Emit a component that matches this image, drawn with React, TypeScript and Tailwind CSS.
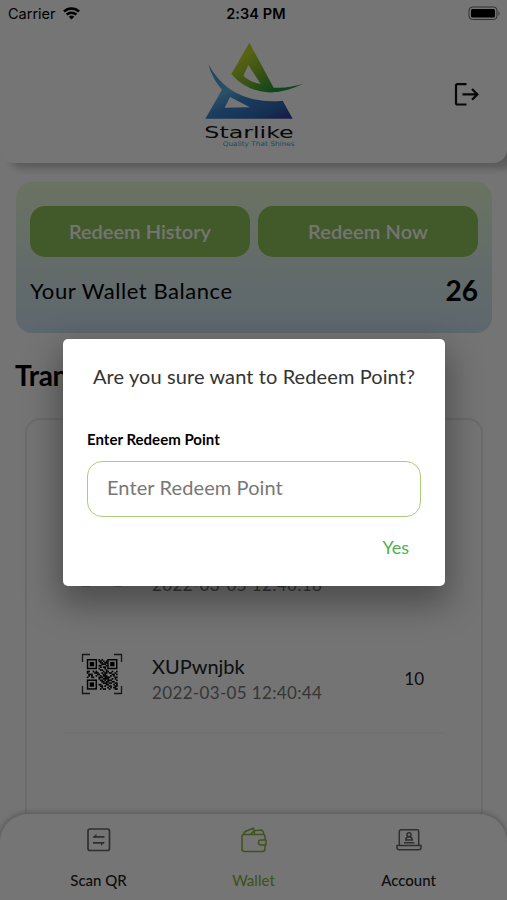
import React, { useState } from 'react';

const TRANSACTIONS = [
    { id: 1, code: 'XUPwnjbk', date: '2022-03-05 12:40:18', points: 10 },
    { id: 2, code: 'XUPwnjbk', date: '2022-03-05 12:40:44', points: 10 },
];

const QR_ROWS = [
    '000000001010000000000',
    '000000001101010000000',
    '000000000110110000000',
    '000000000011100000000',
    '000000001100010000000',
    '000000000101100000000',
    '000000001000100000000',
    '000000000110010000000',
    '110010100001011001001',
    '100001110010110110010',
    '011100011001100001101',
    '010100100101110010100',
    '100110001110111100011',
    '000000001001111001010',
    '000000000110101110001',
    '000000000011011001100',
    '000000000001110110011',
    '000000001100011000101',
    '000000000110100110011',
    '000000000010001010110',
    '000000000101100100011',
];

function QrIcon() {
    return (
        <svg width="42" height="42" viewBox="0 0 42 42" fill="none">
            <path d="M1.5 9V1.5H9M33 1.5h7.5V9M40.5 33v7.5H33M9 40.5H1.5V33" stroke="#333" strokeWidth="1.3" />
            <g transform="translate(5.8 6) scale(1.46)">
                {QR_ROWS.map((row, y) =>
                    row.split('').map((c, x) =>
                        c === '1' ? <rect key={`${x}-${y}`} x={x} y={y} width="1.15" height="1.15" fill="#000" /> : null
                    )
                )}
                {[[0, 0], [14, 0], [0, 14]].map(([x, y]) => (
                    <g key={`${x}-${y}`} transform={`translate(${x} ${y})`}>
                        <rect x="0.5" y="0.5" width="6" height="6" stroke="#000" />
                        <rect x="2" y="2" width="3" height="3" fill="#000" />
                    </g>
                ))}
            </g>
        </svg>
    );
}

function Logo() {
    return (
        <svg width="130" height="130" viewBox="0 0 390 390">
            <defs>
                <linearGradient id="leaf" x1="0" y1="0.2" x2="0.7" y2="0.8">
                    <stop offset="0.2" stopColor="#bfd62a" />
                    <stop offset="0.6" stopColor="#7fb52a" />
                    <stop offset="1" stopColor="#219a3c" />
                </linearGradient>
                <linearGradient id="base" x1="0.1" y1="0" x2="0.9" y2="1">
                    <stop offset="0" stopColor="#3f93cc" />
                    <stop offset="0.38" stopColor="#5cb0e2" />
                    <stop offset="0.55" stopColor="#3a86cc" />
                    <stop offset="0.85" stopColor="#2f66b4" />
                    <stop offset="1" stopColor="#3a3a99" />
                </linearGradient>
            </defs>
            <path
                fillRule="evenodd"
                fill="url(#leaf)"
                d="M178 38L251 173Q298 176 342 160Q284 190 232 187Q165 181 124 132ZM175 105L160 137Q180 156 212 162Z"
            />
            <path
                fillRule="evenodd"
                fill="url(#base)"
                d="M55 103Q82 151 120 178Q185 221 278 212L308 266H46L96 179Q69 151 55 103ZM120 201L104 233L180 232Z"
            />
            <text x="43" y="323" fontFamily="DejaVu Sans" fontSize="50" textLength="268" lengthAdjust="spacingAndGlyphs" fill="#111">
                Starlike
            </text>
            <text x="98" y="348" fontFamily="DejaVu Sans" fontSize="19" textLength="216" lengthAdjust="spacingAndGlyphs" fill="#3fa3c0">
                Quality That Shines
            </text>
        </svg>
    );
}

function StatusBar() {
    return (
        <div className="grid h-7 grid-cols-3 items-center pl-2 pr-1.5 font-['Inter'] text-[14.5px] text-black">
            <div className="flex items-center gap-[7px]">
                <span>Carrier</span>
                <svg className="-mt-px" width="17" height="13" viewBox="0 0 17 13" fill="none" stroke="#000" strokeWidth="2.5">
                    <path d="M1 4.5a10.7 10.7 0 0 1 15 0" />
                    <path d="M3.7 7.6a6.9 6.9 0 0 1 9.6 0" />
                    <path d="M8.5 12.6L5.8 9.8a3.9 3.9 0 0 1 5.4 0z" fill="#000" stroke="none" />
                </svg>
            </div>
            <span className="pl-[3px] text-center font-semibold tracking-[0.1px]">2:34 PM</span>
            <svg className="-mt-px justify-self-end" width="33" height="15" viewBox="0 0 33 15" fill="none">
                <rect x="1" y="1" width="28" height="12.5" rx="3.5" stroke="#666" />
                <rect x="3" y="3" width="24" height="8.5" rx="1.5" fill="#000" />
                <path d="M30.5 5v5q2-2.5 0-5z" fill="#666" />
            </svg>
        </div>
    );
}

const TABS = [
    {
        label: 'Scan QR',
        icon: (
            <svg width="26" height="26" viewBox="0 0 26 26" fill="none" stroke="#666" strokeWidth="1.7">
                <rect x="2" y="2" width="21.5" height="21.5" rx="2" />
                <path d="M18.5 9.8H7.5M7 15.8h11" />
                <path d="M6.5 10.5l4-3.7v3.7zM19 15.1L15 18.8v-3.7z" fill="#666" stroke="none" />
            </svg>
        ),
    },
    {
        label: 'Wallet',
        icon: (
            <svg width="26" height="26" viewBox="0 0 26 26" fill="none" stroke="#8bb53c" strokeWidth="1.5" strokeLinejoin="round">
                <path d="M24 13V9.5Q24 7.5 22 7.5H3Q1 7.5 1 9.5V22Q1 24.5 3.5 24.5H21.5Q24 24.5 24 22V18" />
                <path d="M2.5 7.5Q3 4.5 6 3.7L12.5 1.2L13 3.8L20.5 3Q23 4.5 23 7.5M9.5 7.3L13.3 3.8L13.5 7.3" />
                <path d="M25 13H20a2.5 2.5 0 0 0 0 5h5z" />
            </svg>
        ),
    },
    {
        label: 'Account',
        icon: (
            <svg width="26" height="26" viewBox="0 0 26 26" fill="none" stroke="#666" strokeWidth="1.5">
                <path d="M3.3 18.3V4.5Q3.3 2.8 5 2.8H21Q22.7 2.8 22.7 4.5V18.3" />
                <path d="M1 18.5H25V20.5Q25 22.8 22.5 22.8H3.5Q1 22.8 1 20.5Z" />
                <circle cx="13" cy="7.7" r="2" />
                <path d="M9.8 13Q9.8 9.8 13 9.8T16.2 13ZM8 15.8H18.5" />
            </svg>
        ),
    },
];

export default function App() {
    const [active, setActive] = useState('Wallet');
    const [open, setOpen] = useState(true);
    const [points, setPoints] = useState('');

    return (
        <div className="relative flex h-[900px] w-full flex-col overflow-hidden bg-[#fcfcfc] font-['Lato',sans-serif] text-black">
            <header className="h-[163px] shrink-0 rounded-b-[14px] bg-white shadow-[9px_6px_6px_rgba(0,0,0,0.2)]">
                <StatusBar />
                <div className="grid grid-cols-[190px_1fr_auto] pr-7">
                    <span />
                    <div className="mt-0.5">
                        <Logo />
                    </div>
                    <button type="button" aria-label="Log out" className="mt-[53px] h-[26px]">
                        <svg width="26" height="26" viewBox="0 0 26 26" fill="none" stroke="#111" strokeWidth="2.2">
                            <path d="M13.5 3.2H4.5Q3 3.2 3 4.7V22Q3 23.5 4.5 23.5H13.5M9.5 13.4H24.5M19 8L24.4 13.4L19 18.8" />
                        </svg>
                    </button>
                </div>
            </header>

            <main className="flex min-h-0 flex-1 flex-col pt-[19px] pr-[15px] pl-4">
                <section className="h-[151px] shrink-0 rounded-2xl bg-linear-to-b from-[#e6fbd2] via-[#dbece5] to-[#cbe0f0] px-3.5 pt-6">
                    <div className="grid grid-cols-2 gap-2 text-xl font-semibold text-white">
                        <button type="button" className="h-[51px] rounded-[15px] bg-[#90c359] pb-0.5">Redeem History</button>
                        <button type="button" onClick={() => setOpen(true)} className="h-[51px] rounded-[15px] bg-[#90c359] pb-0.5 tracking-[0.1px]">Redeem Now</button>
                    </div>
                    <div className="mt-[13px] flex h-10 items-center justify-between">
                        <span className="text-[22px] tracking-[0.55px]">Your Wallet Balance</span>
                        <span className="text-[28px] font-bold">26</span>
                    </div>
                </section>

                <h1 className="mt-6 -ml-px h-9 text-[28px] leading-9 font-bold tracking-[-0.3px]">Transactions</h1>

                <div className="mx-[9px] mt-[25px] min-h-0 flex-1 overflow-hidden rounded-t-[15px] border-2 border-b-0 border-[#e9e9e9] px-[37px] pt-[98px]">
                    {TRANSACTIONS.map((t) => (
                        <div key={t.id} className="flex h-[108px] items-start border-b-2 border-transparent pt-[27px] last:border-[#f3f3f3]">
                            <div className="ml-[17px] w-[71px]">
                                <QrIcon />
                            </div>
                            <div className="flex-1">
                                <div className="h-7 text-xl leading-[27px] text-[#222]">{t.code}</div>
                                <div className="h-6 text-[17px] leading-6 tracking-[0.35px] text-[#777]">{t.date}</div>
                            </div>
                            <span className="mr-5 pt-[13px] text-[17px] text-[#222]">{t.points}</span>
                        </div>
                    ))}
                </div>
            </main>

            <nav className="grid h-[86px] shrink-0 grid-cols-3 rounded-t-[28px] bg-white px-[21px] pt-[13px] shadow-[0_0_5px_2px_rgba(0,0,0,0.2)]">
                {TABS.map((tab) => (
                    <button
                        key={tab.label}
                        type="button"
                        onClick={() => setActive(tab.label)}
                        className={`flex flex-col items-center gap-[17px] text-[15px] leading-5 font-medium ${active === tab.label ? 'text-[#8bb53c]' : 'text-[#222]'}`}
                    >
                        {tab.icon}
                        <span>{tab.label}</span>
                    </button>
                ))}
            </nav>

            {open && (
                <div className="absolute inset-0 flex items-center justify-center bg-black/54 pt-[25px] pl-px">
                    <div className="flex h-[247px] w-[382px] flex-col rounded-[5px] bg-white px-6 pt-[23px] shadow-[0_14px_34px_4px_rgba(0,0,0,0.35)]">
                        <h2 className="text-center text-xl leading-7 tracking-[0.1px] text-[#333]">Are you sure want to Redeem Point?</h2>
                        <label className="mt-[39px] h-5 text-[15px] leading-5 font-bold tracking-[0.02px]">Enter Redeem Point</label>
                        <input
                            value={points}
                            onChange={(e) => setPoints(e.target.value)}
                            placeholder="Enter Redeem Point"
                            className="mt-3 h-14 w-full shrink-0 rounded-[15px] border border-[#a8cf78] px-[19px] pb-1 text-xl tracking-[0.1px] outline-none placeholder:text-[#777]"
                        />
                        <button type="button" onClick={() => setOpen(false)} className="mt-[18px] mr-3 self-end text-lg leading-6 text-[#4caf50]">Yes</button>
                    </div>
                </div>
            )}
        </div>
    );
}
